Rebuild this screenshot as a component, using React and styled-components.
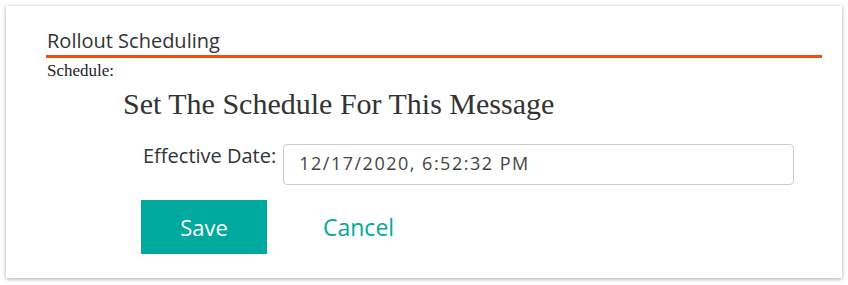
import styled, { createGlobalStyle } from "styled-components";

const Global = createGlobalStyle`
  body {
    margin: 0;
    background: #ffffff;
    font-family: "Open Sans", "Noto Sans", sans-serif;
  }
`;

const Page = styled.div`
  padding: 6px;
  height: 285px;
  box-sizing: border-box;
`;

const Card = styled.div`
  background: #fff;
  height: 272px;
  box-sizing: border-box;
  box-shadow: 0 1px 4px rgba(0, 0, 0, 0.35);
  padding: 24px 20px 0 40px;
`;

const Header = styled.div`
  font-size: 20px;
  line-height: 22px;
  color: #333;
  padding-left: 1px;
  padding-bottom: 3px;
  border-bottom: 3px solid #f04e0a;
`;

const SmallLabel = styled.div`
  font-family: "Liberation Serif", serif;
  font-size: 17px;
  line-height: 20px;
  color: #222;
  margin-top: 3px;
  padding-left: 1px;
`;

const Form = styled.div`
  padding-left: 77px;
`;

const Heading = styled.h2`
  margin: 6px 0 0;
  font-family: "Liberation Serif", serif;
  font-weight: normal;
  font-size: 30px;
  line-height: 34px;
  color: #333;
`;

const Row = styled.div`
  display: flex;
  align-items: flex-start;
  gap: 7px;
  margin-top: 23px;
  padding-left: 20px;
`;

const Label = styled.label`
  font-size: 20px;
  line-height: 24px;
  color: #333;
`;

const Input = styled.div`
  width: 511px;
  height: 41px;
  box-sizing: border-box;
  border: 1px solid #ccc;
  border-radius: 4px;
  padding: 0 15px 3px;
  display: flex;
  align-items: center;
  font-size: 18px;
  letter-spacing: 1.5px;
  color: #444;
`;

const Buttons = styled.div`
  display: flex;
  align-items: center;
  gap: 56px;
  margin-top: 15px;
  padding-left: 18px;
`;

const SaveButton = styled.button`
  width: 126px;
  height: 54px;
  border: none;
  background: #00a99d;
  color: #fff;
  font-family: "Open Sans", sans-serif;
  font-size: 22px;
`;

const CancelButton = styled.button`
  border: none;
  background: none;
  padding: 0;
  color: #00a99d;
  font-family: "Open Sans", sans-serif;
  font-size: 23px;
`;

export default function App() {
  return (
    <>
      <Global />
      <Page>
        <Card>
          <Header>Rollout Scheduling</Header>
          <SmallLabel>Schedule:</SmallLabel>
          <Form>
            <Heading>Set The Schedule For This Message</Heading>
            <Row>
              <Label>Effective Date:</Label>
              <Input>12/17/2020, 6:52:32 PM</Input>
            </Row>
            <Buttons>
              <SaveButton>Save</SaveButton>
              <CancelButton>Cancel</CancelButton>
            </Buttons>
          </Form>
        </Card>
      </Page>
    </>
  );
}
